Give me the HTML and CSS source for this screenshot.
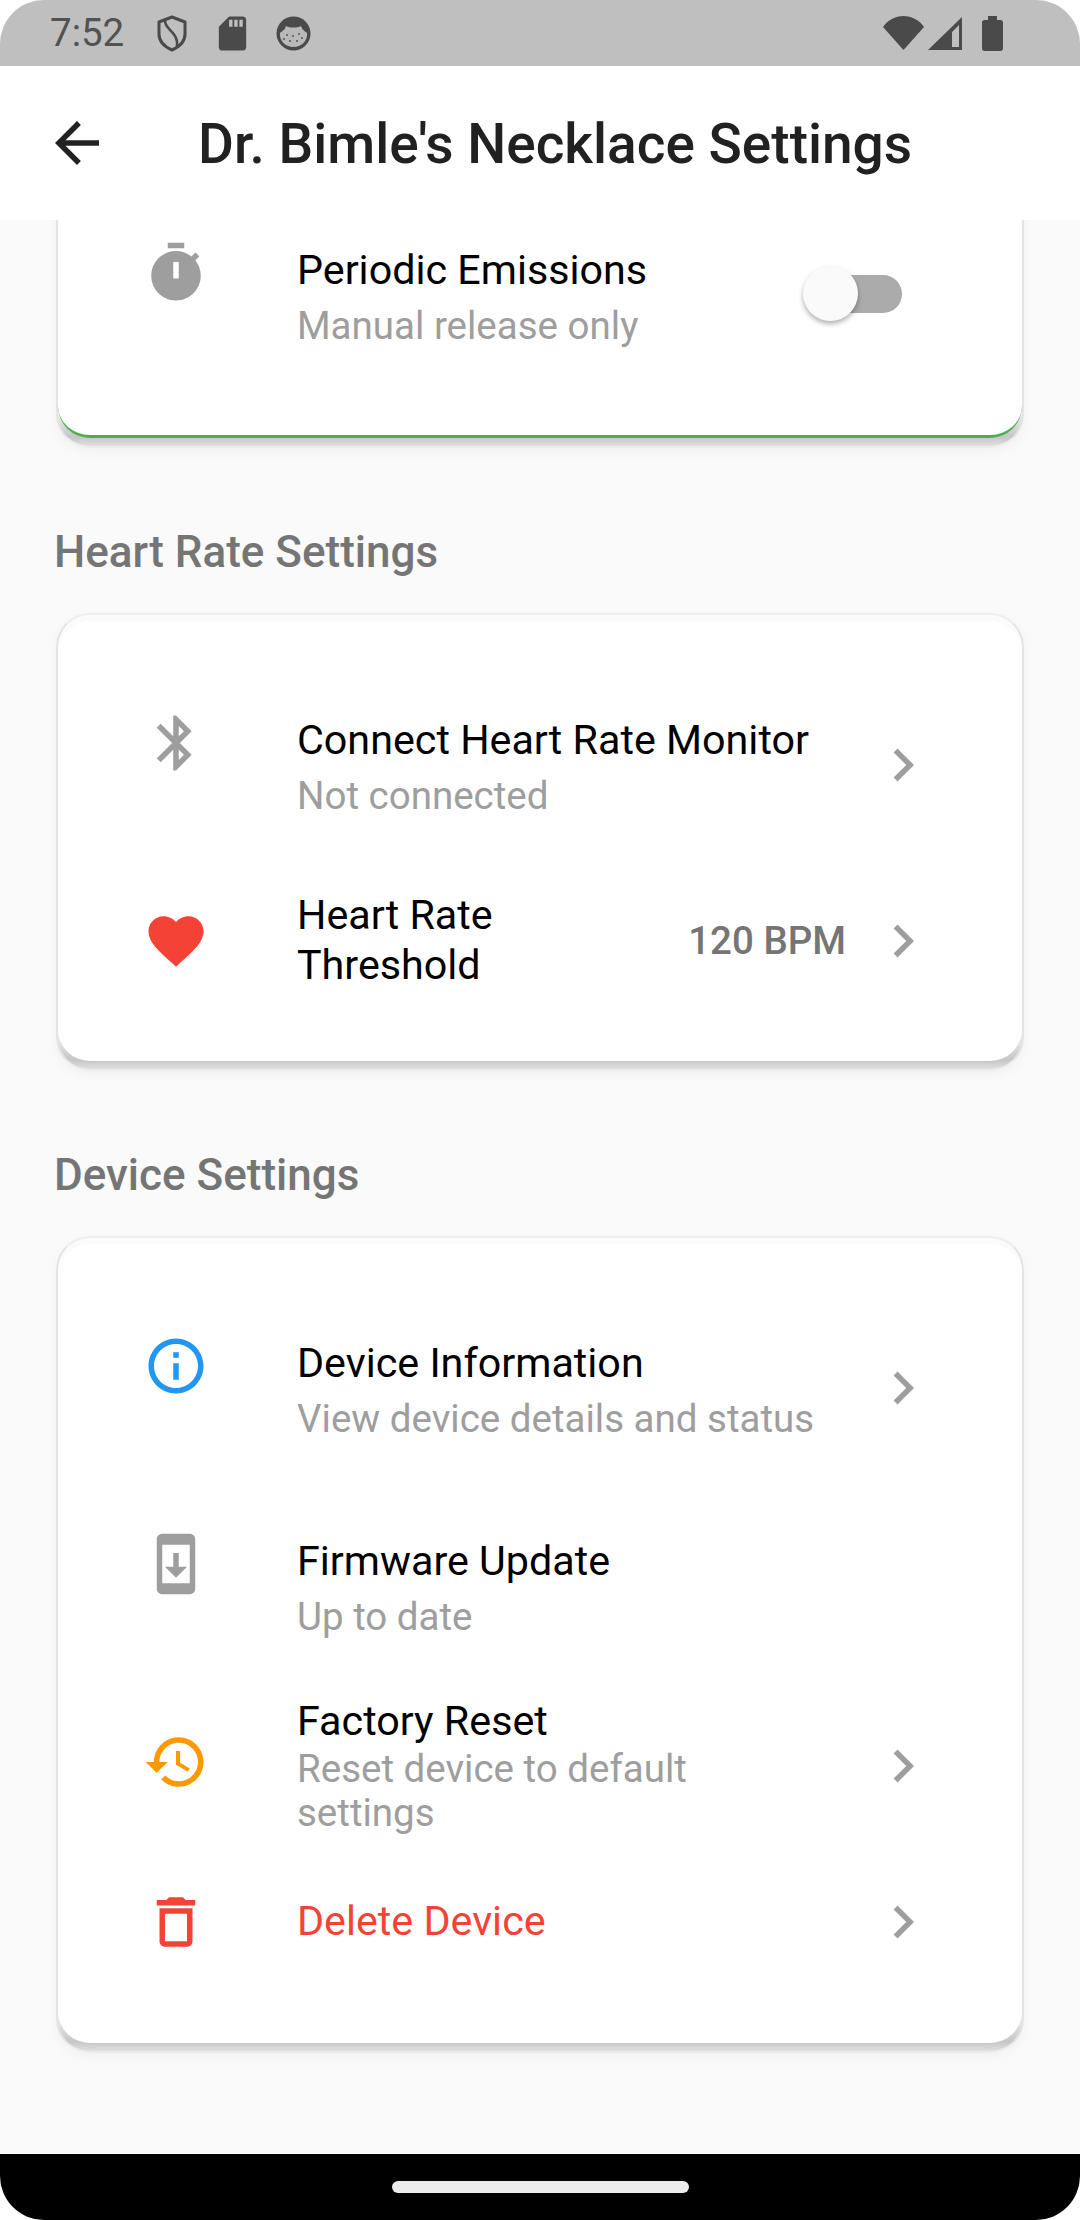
FILE: index.html
```html
<!DOCTYPE html>
<html lang="en">
<head>
<meta charset="utf-8">
<title>Dr. Bimle's Necklace Settings</title>
<link rel="stylesheet" href="styles.css">
</head>
<body>
<div class="screen">
  <header class="statusbar">
    <div class="status-left">
      <span class="time">7:52</span>
      <svg class="si-shield" viewBox="0 0 30 37"><path d="M15 2 28 7V19C28 27 22 32 15 35 8 32 2 27 2 19V7Z" fill="none" stroke="#4a4a4a" stroke-width="3" stroke-linejoin="round"/><path d="M8 6C8 15 22 17 20 32" fill="none" stroke="#4a4a4a" stroke-width="2.6"/></svg>
      <svg class="si-sd" viewBox="0 0 24 24"><path fill="#4a4a4a" d="M18 2h-8L4.020 8 4 20c0 1.100.9 2 2 2h12c1.100 0 2-.9 2-2V4c0-1.100-.9-2-2-2zm-6 6h-2V4h2v4zm3 0h-2V4h2v4zm3 0h-2V4h2v4z"/></svg>
      <svg class="si-cat" viewBox="0 0 35 35"><circle cx="17.500" cy="17.500" r="17" fill="#4a4a4a"/><path d="M4 17C6 15 9 14 10 10 14 12 21 12 25 10 26 14 29 15 31 17 32 24 26 31 17.500 31 9 31 3 24 4 17Z" fill="#b9b9b9"/><g fill="#555"><circle cx="11" cy="19" r="1"/><circle cx="17" cy="20" r="1"/><circle cx="23" cy="18" r="1"/><circle cx="14" cy="25" r="1"/><circle cx="21" cy="25" r="1"/><circle cx="26" cy="22" r="1"/><circle cx="8" cy="23" r="1"/></g></svg>
    </div>
    <div class="status-right">
      <svg class="si-wifi" viewBox="0 0 41 34"><path fill="#4a4a4a" d="M0 11C5 4 12 0 20.500 0S36 4 41 11L20.500 34Z"/></svg>
      <svg class="si-signal" viewBox="0 0 34 33"><path fill="#4a4a4a" d="M34 0V33H0ZM31 8 24 15V30H31Z"/></svg>
      <svg class="si-battery" viewBox="0 0 21 35"><path fill="#4a4a4a" d="M6 0H15V4H18.500C20 4 21 5 21 6.500V32.500C21 34 20 35 18.500 35H2.500C1 35 0 34 0 32.500V6.500C0 5 1 4 2.500 4H6Z"/></svg>
    </div>
  </header>

  <div class="appbar">
    <svg class="icon back" viewBox="0 0 24 24"><path d="M20 11H7.830l5.590-5.590L12 4l-8 8 8 8 1.410-1.410L7.830 13H20v-2z"/></svg>
    <h1 class="appbar-title">Dr. Bimle's Necklace Settings</h1>
  </div>

  <main class="content">
    <div class="shell shell-clipped">
      <section class="card card-accent card-first">
        <div class="row row-top">
          <svg class="icon grey" viewBox="0 0 24 24"><path d="M9 1h6v2H9zm10.030 6.390l1.420-1.420c-.43-.51-.9-.99-1.410-1.410l-1.420 1.420C16.070 4.740 14.120 4 12 4c-4.970 0-9 4.030-9 9s4.020 9 9 9 9-4.030 9-9c0-2.120-.74-4.070-1.970-5.610zM13 14h-2V8h2v6z"/></svg>
          <div class="text">
            <div class="title">Periodic Emissions</div>
            <div class="sub">Manual release only</div>
          </div>
          <div class="toggle"><span class="track"></span><span class="thumb"></span></div>
        </div>
      </section>
    </div>

    <h2 class="heading">Heart Rate Settings</h2>
    <div class="shell">
      <section class="card card-hr">
        <div class="row row-top">
          <svg class="icon grey" viewBox="0 0 24 24"><path d="M17.710 7.710L12 2h-1v7.590L6.410 5 5 6.410 10.590 12 5 17.590 6.410 19 11 14.410V22h1l5.710-5.710-4.300-4.290 4.300-4.290zM13 5.830l1.880 1.880L13 9.590V5.830zm1.880 10.460L13 18.170v-3.760l1.880 1.880z"/></svg>
          <div class="text">
            <div class="title">Connect Heart Rate Monitor</div>
            <div class="sub">Not connected</div>
          </div>
          <svg class="icon chevron" viewBox="0 0 24 24"><path d="M10 6L8.590 7.410 13.170 12l-4.580 4.590L10 18l6-6z"/></svg>
        </div>
        <div class="row gap-heart">
          <svg class="icon red" viewBox="0 0 24 24"><path d="M12 21.350l-1.450-1.320C5.400 15.360 2 12.280 2 8.500 2 5.420 4.420 3 7.500 3c1.740 0 3.410.81 4.500 2.090C13.090 3.810 14.760 3 16.500 3 19.580 3 22 5.420 22 8.500c0 3.780-3.400 6.860-8.550 11.540L12 21.350z"/></svg>
          <div class="text">
            <div class="title title-tight">Heart Rate Threshold</div>
          </div>
          <div class="value">120 BPM</div>
          <svg class="icon chevron" viewBox="0 0 24 24"><path d="M10 6L8.590 7.410 13.170 12l-4.580 4.590L10 18l6-6z"/></svg>
        </div>
      </section>
    </div>

    <h2 class="heading">Device Settings</h2>
    <div class="shell">
      <section class="card card-device">
        <div class="row row-top">
          <svg class="icon blue" viewBox="0 0 24 24"><path d="M11 7h2v2h-2zm0 4h2v6h-2zm1-9C6.480 2 2 6.480 2 12s4.480 10 10 10 10-4.480 10-10S17.520 2 12 2zm0 18c-4.410 0-8-3.590-8-8s3.590-8 8-8 8 3.590 8 8-3.590 8-8 8z"/></svg>
          <div class="text">
            <div class="title">Device Information</div>
            <div class="sub">View device details and status</div>
          </div>
          <svg class="icon chevron" viewBox="0 0 24 24"><path d="M10 6L8.590 7.410 13.170 12l-4.580 4.590L10 18l6-6z"/></svg>
        </div>
        <div class="row row-top gap-firmware">
          <svg class="icon grey" viewBox="0 0 24 24"><path d="M17.010 1H7c-1.100 0-2 .9-2 2v18c0 1.100.9 2 2 2h10c1.100 0 2-.9 2-2V3c0-1.100-.89-2-1.990-2zM17 19H7V5h10v14zm-1-6h-3V8h-2v5H8l4 4 4-4z"/></svg>
          <div class="text">
            <div class="title">Firmware Update</div>
            <div class="sub">Up to date</div>
          </div>
        </div>
        <div class="row gap-factory">
          <svg class="icon orange raised" viewBox="0 0 24 24"><path d="M13 3c-4.970 0-9 4.030-9 9H1l3.890 3.890.07.14L9 12H6c0-3.870 3.130-7 7-7s7 3.130 7 7-3.130 7-7 7c-1.930 0-3.680-.79-4.940-2.060l-1.420 1.420C8.270 19.990 10.510 21 13 21c4.970 0 9-4.030 9-9s-4.030-9-9-9zm-1 5v5l4.280 2.540.72-1.210-3.500-2.080V8H12z"/></svg>
          <div class="text">
            <div class="title title-tight">Factory Reset</div>
            <div class="sub sub-tight">Reset device to default settings</div>
          </div>
          <svg class="icon chevron" viewBox="0 0 24 24"><path d="M10 6L8.590 7.410 13.170 12l-4.580 4.590L10 18l6-6z"/></svg>
        </div>
        <div class="row gap-delete">
          <svg class="icon red" viewBox="0 0 24 24"><path d="M6 19c0 1.100.9 2 2 2h8c1.100 0 2-.9 2-2V7H6v12zM8 9h8v10H8V9zm7.500-5l-1-1h-5l-1 1H5v2h14V4h-3.500z"/></svg>
          <div class="text">
            <div class="title title-tight danger">Delete Device</div>
          </div>
          <svg class="icon chevron" viewBox="0 0 24 24"><path d="M10 6L8.590 7.410 13.170 12l-4.580 4.590L10 18l6-6z"/></svg>
        </div>
      </section>
    </div>
  </main>

  <footer class="navbar"><span class="pill"></span></footer>
</div>
</body>
</html>
```
FILE: styles.css
```css
* { box-sizing: border-box; }
html, body { margin: 0; padding: 0; background: #fff; }
body { font-family: Roboto, "Noto Sans", sans-serif; }

.screen {
  width: 1080px; height: 2220px;
  display: flex; flex-direction: column;
  border-radius: 44px; overflow: hidden;
  background: #fafafa;
}

.statusbar {
  height: 66px; flex: none;
  background: #bfbfbf;
  display: flex; justify-content: space-between; align-items: center;
  padding: 0 77px 0 50px;
}
.status-left, .status-right { display: flex; align-items: center; }
.time { font-size: 38.500px; color: #525252; width: 107px; line-height: 66px; }
.si-shield { width: 30px; height: 37px; margin-right: 25px; }
.si-sd { width: 41px; height: 41px; margin-right: 23px; }
.si-cat { width: 35px; height: 35px; }
.si-wifi { width: 41px; height: 34px; margin-right: 4px; }
.si-signal { width: 34px; height: 33px; margin-right: 20px; }
.si-battery { width: 21px; height: 35px; }

.appbar {
  height: 154px; flex: none;
  background: #fff;
  display: flex; align-items: center;
  padding-left: 44px;
  position: relative; z-index: 1;
}
.appbar-title { margin: 2px 0 0 88px; font-size: 55px; font-weight: 500; color: #212121; line-height: 66px; }

.icon { width: 66px; height: 66px; flex: none; fill: #9e9e9e; }
.back { fill: #212121; }
.grey { fill: #9e9e9e; }
.red { fill: #f44336; }
.blue { fill: #2196f3; }
.orange { fill: #ff9800; }
.chevron { fill: #9e9e9e; }
.raised { margin-top: -7px; }

.content { flex: 1; min-height: 0; overflow: hidden; padding: 0 56px; }

.shell {
  border: 2px solid #e4e4e4;
  border-top-color: #eee;
  border-bottom-color: #ececec;
  border-radius: 34px;
  padding: 6px 0 8px;
  background: linear-gradient(to top, #e0e0e0 0, #c6c6c6 9px, #f0f0f0 34px, #fbfbfb 100%);
  box-shadow: 0 4px 12px rgba(0,0,0,.04);
}
.shell-clipped { margin-top: -61px; }

.card {
  background: #fff;
  border-radius: 32px;
}
.card-first { padding: 76px 0 82px; }
.card-hr { padding: 92px 0 71px; }
.card-device { padding: 92px 0 88px; }
.card-accent { border-bottom: 3px solid #4caf50; }

.row { display: flex; align-items: center; padding: 0 86px 0 85px; }
.row-top > .icon:first-child { align-self: flex-start; margin-top: -3px; }
.row-top > .chevron { margin-top: -6px; }
.gap-heart { margin-top: 68px; }
.gap-firmware { margin-top: 88px; }
.gap-factory { margin-top: 53px; }
.gap-delete { margin-top: 54px; }

.text { flex: 1; min-width: 0; margin-left: 88px; margin-right: 49px; }
.title { font-size: 41.250px; line-height: 55px; color: #000; }
.title-tight { line-height: 49.500px; }
.sub { font-size: 38.500px; line-height: 55px; color: #9e9e9e; }
.sub-tight { line-height: 44px; }
.danger { color: #f44336; }
.value { font-size: 38.500px; font-weight: 500; color: #757575; margin-right: 24px; white-space: nowrap; }

.heading { margin: 79px 0 36px -2px; font-size: 44px; line-height: 50px; font-weight: 500; color: #757575; }

.toggle { width: 99px; height: 55px; flex: none; position: relative; margin-right: 34px; align-self: flex-start; margin-top: 23px; }
.track { position: absolute; left: 18px; right: 0; top: 9px; height: 38px; border-radius: 19px; background: #ababab; }
.thumb { position: absolute; left: 0; top: 0; width: 55px; height: 55px; border-radius: 50%; background: #fafafa; box-shadow: 0 3px 5px rgba(0,0,0,.3); }

.navbar { height: 66px; flex: none; background: #000; display: flex; justify-content: center; padding-top: 27px; }
.pill { width: 297px; height: 12px; border-radius: 6px; background: #ececec; }
```
